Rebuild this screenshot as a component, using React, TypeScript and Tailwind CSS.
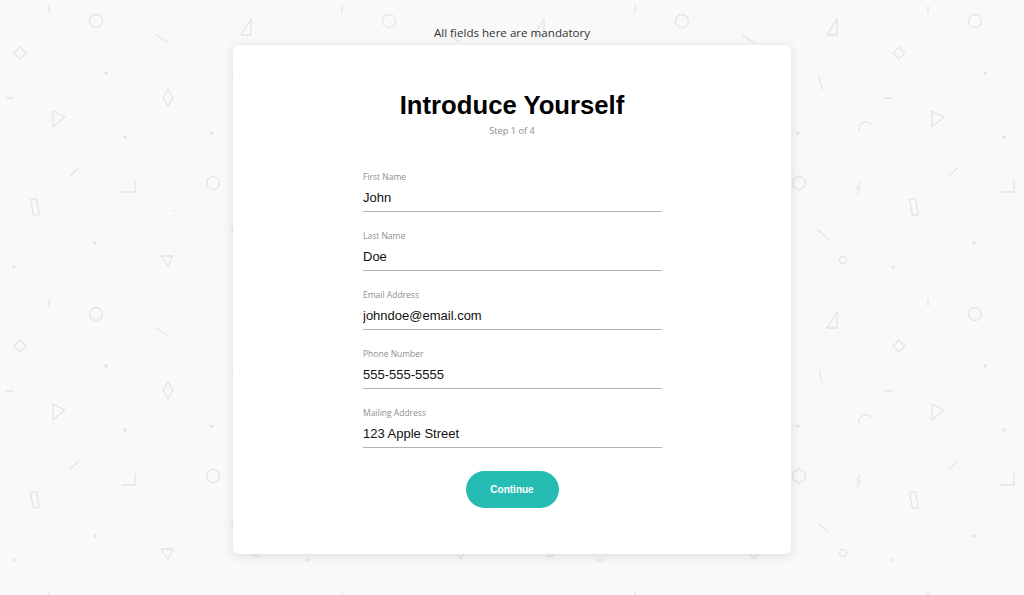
import React from "react";

const fields = [
  { label: "First Name", value: "John" },
  { label: "Last Name", value: "Doe" },
  { label: "Email Address", value: "johndoe@email.com" },
  { label: "Phone Number", value: "555-555-5555" },
  { label: "Mailing Address", value: "123 Apple Street" },
];

function Doodles() {
  return (
    <svg className="absolute inset-0 h-full w-full" aria-hidden="true">
      <defs>
        <pattern id="doodle" width="293" height="293" patternUnits="userSpaceOnUse">
          <g fill="none" stroke="#e4e4e4" strokeWidth="1.3" strokeLinecap="round" strokeLinejoin="round">
            <line x1="49" y1="6" x2="49" y2="13" />
            <circle cx="96" cy="21" r="6.5" />
            <line x1="156" y1="35" x2="167" y2="42" />
            <polygon points="20,47 26,53 20,59 14,53" />
            <polygon points="168,89 173,97 168,106 163,97" />
            <line x1="6" y1="98" x2="13" y2="98" />
            <polygon points="53,111 65,117 53,127" />
            <line x1="70" y1="176" x2="79" y2="168" />
            <polyline points="122,192 135,192 135,181" />
            <polygon points="213,176 219,179.5 219,186.5 213,190 207,186.5 207,179.5" />
            <rect x="32" y="199" width="6" height="16" transform="rotate(-10 35 207)" />
            <polygon points="161,256 173,256 168,266" />
            <polygon points="241,35 251,19 251,35" />
            <line x1="233" y1="77" x2="236" y2="89" />
            <path d="M273,130 A7,7 0 0 1 285,124" />
            <path d="M274,182 L271,188 L274,188 L271,194" />
            <line x1="232" y1="230" x2="242" y2="239" />
            <circle cx="257" cy="260" r="3.5" />
          </g>
          <g fill="#e4e4e4">
            <circle cx="106" cy="73" r="1.8" />
            <circle cx="125" cy="137" r="1.8" />
            <polygon points="209,132 214,132 211.5,136" />
            <circle cx="174" cy="211" r="1" />
            <circle cx="95" cy="243" r="1.8" />
            <circle cx="14" cy="267" r="1.6" />
          </g>
        </pattern>
      </defs>
      <rect width="100%" height="100%" fill="url(#doodle)" />
    </svg>
  );
}

export default function App() {
  return (
    <div className="relative h-[595px] w-full overflow-hidden bg-[#f9f9f9]">
      <Doodles />
      <div className="relative flex flex-col items-center pt-[25px]">
        <p className="text-[11.6px] leading-[16px] text-[#333] font-['Open_Sans',sans-serif]">
          All fields here are mandatory
        </p>
        <div className="mt-[4px] flex h-[509px] w-[558px] flex-col items-center rounded-[6px] bg-white pt-[45px] shadow-[0_2px_12px_rgba(0,0,0,0.12)]">
          <h1 className="text-[25.7px] leading-[30px] font-bold text-black font-['Liberation_Sans',Arial,sans-serif]">
            Introduce Yourself
          </h1>
          <p className="mt-[4px] text-[9.2px] leading-[14px] text-[#8c8c8c] font-['Open_Sans',sans-serif]">
            Step 1 of 4
          </p>
          <form className="mt-[33px] ml-[1px] flex w-[299px] flex-col gap-[18px]">
            {fields.map((f) => (
              <label key={f.label} className="flex flex-col border-b border-[#b3b3b3] pb-[3px]">
                <span className="text-[8.5px] leading-[12px] text-[#8f8f8f] font-['Open_Sans',sans-serif]">
                  {f.label}
                </span>
                <input
                  readOnly
                  value={f.value}
                  className="mt-[5px] h-[20px] bg-transparent text-[13px] leading-[20px] text-[#111] outline-none font-['Liberation_Sans',Arial,sans-serif]"
                />
              </label>
            ))}
          </form>
          <button
            type="button"
            className="mt-[23px] h-[37px] w-[93px] rounded-full bg-[#27bcb3] text-[10px] font-semibold text-white font-['Liberation_Sans',Arial,sans-serif]"
          >
            Continue
          </button>
        </div>
      </div>
    </div>
  );
}
